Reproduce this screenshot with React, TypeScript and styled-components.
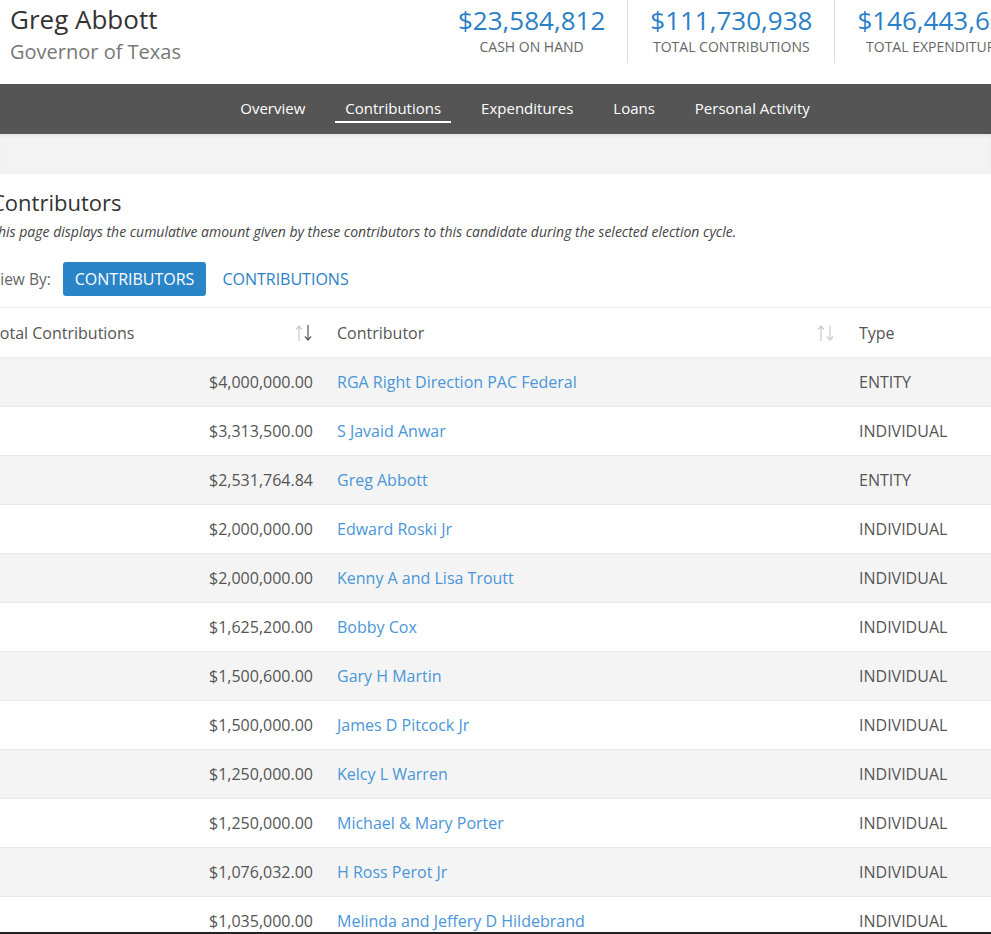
import React from 'react';
import styled, {createGlobalStyle} from 'styled-components';

const GlobalStyle = createGlobalStyle`
  html, body {
    margin: 0;
    padding: 0;
    overflow: hidden;
    background: #fff;
    font-family: "Open Sans", "Liberation Sans", sans-serif;
    color: #555;
  }
`

interface Contribution {
    amount: string;
    name: string;
    type: string;
}

const rows: Contribution[] = [
    {amount: '$4,000,000.00', name: 'RGA Right Direction PAC Federal', type: 'ENTITY'},
    {amount: '$3,313,500.00', name: 'S Javaid Anwar', type: 'INDIVIDUAL'},
    {amount: '$2,531,764.84', name: 'Greg Abbott', type: 'ENTITY'},
    {amount: '$2,000,000.00', name: 'Edward Roski Jr', type: 'INDIVIDUAL'},
    {amount: '$2,000,000.00', name: 'Kenny A and Lisa Troutt', type: 'INDIVIDUAL'},
    {amount: '$1,625,200.00', name: 'Bobby Cox', type: 'INDIVIDUAL'},
    {amount: '$1,500,600.00', name: 'Gary H Martin', type: 'INDIVIDUAL'},
    {amount: '$1,500,000.00', name: 'James D Pitcock Jr', type: 'INDIVIDUAL'},
    {amount: '$1,250,000.00', name: 'Kelcy L Warren', type: 'INDIVIDUAL'},
    {amount: '$1,250,000.00', name: 'Michael & Mary Porter', type: 'INDIVIDUAL'},
    {amount: '$1,076,032.00', name: 'H Ross Perot Jr', type: 'INDIVIDUAL'},
    {amount: '$1,035,000.00', name: 'Melinda and Jeffery D Hildebrand', type: 'INDIVIDUAL'},
]

const stats = [
    {value: '$23,584,812', label: 'Cash on hand'},
    {value: '$111,730,938', label: 'Total contributions'},
    {value: '$146,443,602', label: 'Total expenditures'},
]

const navItems = ['Overview', 'Contributions', 'Expenditures', 'Loans', 'Personal Activity']

const SortIcon = ({active}: { active?: boolean }) => (
    <svg width="20" height="20" viewBox="0 0 20 20" fill="none">
        <g stroke="#ccc" strokeWidth="1.2">
            <path d="M6 18V3"/>
            <path d="M3 6.5L6 3l3 3.5"/>
        </g>
        <g stroke={active ? '#555' : '#ccc'} strokeWidth="1.2">
            <path d="M15 2v15"/>
            <path d="M12 13.5l3 3.5 3-3.5"/>
        </g>
    </svg>
)

export default function App() {
    return (
        <Page>
            <GlobalStyle/>
            <Header>
                <Title>
                    <Name>Greg Abbott</Name>
                    <Office>Governor of Texas</Office>
                </Title>
                <Stats>
                    {stats.map((s, i) => (
                        <Stat key={s.label} $first={i === 0}>
                            <StatValue>{s.value}</StatValue>
                            <StatLabel>{s.label}</StatLabel>
                        </Stat>
                    ))}
                </Stats>
            </Header>
            <Nav>
                {navItems.map(item => (
                    <NavItem key={item} $active={item === 'Contributions'}>{item}</NavItem>
                ))}
            </Nav>
            <Band/>
            <Content>
                <Heading>Contributors</Heading>
                <Description>
                    This page displays the cumulative amount given by these contributors to this candidate during the selected election cycle.
                </Description>
                <ViewBy>
                    <ViewLabel>View By:</ViewLabel>
                    <ViewButton $active>Contributors</ViewButton>
                    <ViewButton>Contributions</ViewButton>
                </ViewBy>
            </Content>
            <Table>
                <colgroup>
                    <col style={{width: 346}}/>
                    <col style={{width: 522}}/>
                    <col/>
                </colgroup>
                <thead>
                <tr>
                    <HeadCell>
                        <HeadInner>
                            Total Contributions
                            <SortIcon active/>
                        </HeadInner>
                    </HeadCell>
                    <HeadCell>
                        <HeadInner>
                            Contributor
                            <SortIcon/>
                        </HeadInner>
                    </HeadCell>
                    <HeadCell>Type</HeadCell>
                </tr>
                </thead>
                <tbody>
                {rows.map((r, i) => (
                    <Row key={i} $striped={i % 2 === 0}>
                        <Amount>{r.amount}</Amount>
                        <Cell><NameLink href="#">{r.name}</NameLink></Cell>
                        <Cell>{r.type}</Cell>
                    </Row>
                ))}
                </tbody>
            </Table>
            <BottomEdge/>
        </Page>
    );
}

const Page = styled.div`
  width: 991px;
  min-height: 934px;
  overflow: hidden;
`

const Header = styled.header`
  display: flex;
  height: 84px;
  padding-left: 10px;
  background: #fff;
`

const Title = styled.div`
  flex-shrink: 0;
  width: 426px;
  padding-top: 1px;
`

const Name = styled.h1`
  margin: 0;
  font-size: 26px;
  font-weight: 400;
  line-height: 36px;
  color: #333;
`

const Office = styled.div`
  font-size: 20px;
  line-height: 30px;
  color: #777;
`

const Stats = styled.div`
  display: flex;
  flex-shrink: 0;
  white-space: nowrap;
`

const Stat = styled.div<{ $first?: boolean }>`
  display: flex;
  flex-direction: column;
  align-items: center;
  height: 63px;
  padding: 0 22px;
  border-left: ${p => p.$first ? 'none' : '1px solid #ddd'};
`

const StatValue = styled.div`
  font-size: 26px;
  line-height: 40px;
  color: #2a7fc6;
`

const StatLabel = styled.div`
  font-size: 14px;
  line-height: 14px;
  text-transform: uppercase;
  color: #666;
`

const Nav = styled.nav`
  display: flex;
  justify-content: center;
  align-items: flex-start;
  gap: 20px;
  height: 50px;
  padding-left: 59px;
  background: #555;
`

const NavItem = styled.a<{ $active?: boolean }>`
  display: flex;
  align-items: center;
  box-sizing: border-box;
  height: 37px;
  margin-top: 2px;
  padding: 8px 10px 0;
  font-size: 15px;
  color: #fff;
  border-bottom: 2px solid ${p => p.$active ? '#fff' : 'transparent'};
`

const Band = styled.div`
  height: 40px;
  background: #f3f3f3;
  box-shadow: inset 0 3px 4px -2px rgba(0, 0, 0, 0.08);
`

const Content = styled.section`
  margin-left: -9px;
  padding-top: 13px;
`

const Heading = styled.h2`
  margin: 0;
  font-size: 22px;
  font-weight: 400;
  line-height: 30px;
  color: #333;
`

const Description = styled.p`
  margin: 5px 0 0;
  font-size: 14px;
  font-style: italic;
  line-height: 20px;
  color: #444;
`

const ViewBy = styled.div`
  display: flex;
  align-items: center;
  gap: 12px;
  margin-top: 20px;
  padding-bottom: 10px;
`

const ViewLabel = styled.span`
  font-size: 15.5px;
  color: #666;
`

const ViewButton = styled.a<{ $active?: boolean }>`
  display: inline-flex;
  align-items: center;
  height: 34px;
  margin-left: ${p => p.$active ? '0' : '4px'};
  padding: 0 ${p => p.$active ? '12px' : '0'};
  border-radius: 3px;
  font-size: 16px;
  text-transform: uppercase;
  color: ${p => p.$active ? '#fff' : '#2a7fc6'};
  background: ${p => p.$active ? '#2a84c8' : 'transparent'};
`

const Table = styled.table`
  margin-top: 1px;
  margin-left: -21px;
  width: 1160px;
  table-layout: fixed;
  border-collapse: collapse;
  border-top: 1px solid #eee;
  font-size: 16px;
`

const HeadCell = styled.th`
  box-sizing: border-box;
  height: 50px;
  padding: 2px 12px 0;
  text-align: left;
  font-weight: 400;
  color: #555;
  border-bottom: 2px solid #eee;
`

const HeadInner = styled.div`
  display: flex;
  align-items: center;
  justify-content: space-between;
`

const Row = styled.tr<{ $striped?: boolean }>`
  height: 49px;
  background: ${p => p.$striped ? '#f4f4f4' : '#fff'};
  border-bottom: 1px solid #e8e8e8;
`

const Cell = styled.td`
  box-sizing: border-box;
  padding: 0 12px;
  color: #555;
  white-space: nowrap;
`

const Amount = styled(Cell)`
  text-align: right;
`

const NameLink = styled.a`
  color: #4a96d8;
  text-decoration: none;
`

const BottomEdge = styled.div`
  position: fixed;
  left: 0;
  right: 0;
  bottom: 0;
  height: 2px;
  background: #222;
`
